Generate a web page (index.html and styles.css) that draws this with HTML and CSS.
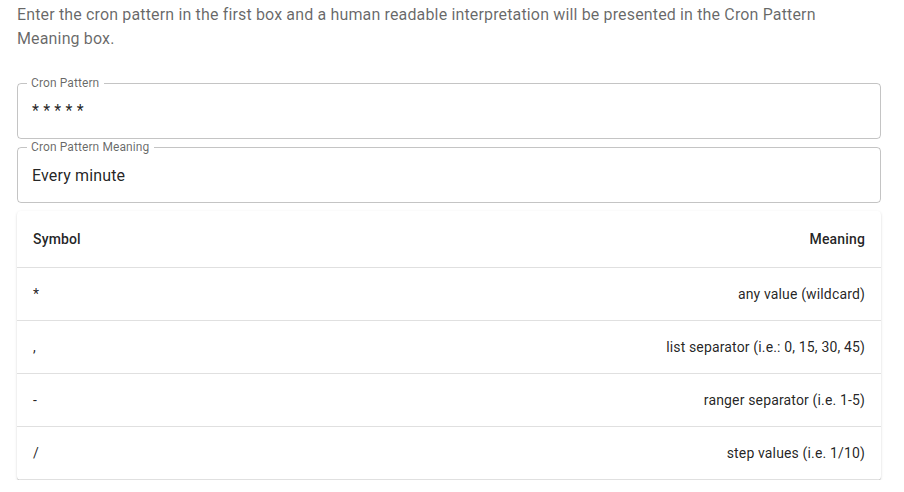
FILE: index.html
```html
<!DOCTYPE html>
<html lang="en">
<head>
<meta charset="utf-8">
<title>Cron Pattern</title>
<link rel="stylesheet" href="styles.css">
</head>
<body>
<main class="page">
  <p class="intro">Enter the cron pattern in the first box and a human readable interpretation will be presented in the Cron Pattern Meaning box.</p>

  <div class="field field-first">
    <span class="field-label">Cron Pattern</span>
    <div class="field-input field-input-pattern">* * * * *</div>
  </div>

  <div class="field">
    <span class="field-label">Cron Pattern Meaning</span>
    <div class="field-input">Every minute</div>
  </div>

  <div class="paper">
    <table class="table">
      <thead>
        <tr><th class="cell">Symbol</th><th class="cell cell-right">Meaning</th></tr>
      </thead>
      <tbody>
        <tr><td class="cell">*</td><td class="cell cell-right">any value (wildcard)</td></tr>
        <tr><td class="cell">,</td><td class="cell cell-right">list separator (i.e.: 0, 15, 30, 45)</td></tr>
        <tr><td class="cell">-</td><td class="cell cell-right">ranger separator (i.e. 1-5)</td></tr>
        <tr><td class="cell">/</td><td class="cell cell-right">step values (i.e. 1/10)</td></tr>
      </tbody>
    </table>
  </div>
</main>
</body>
</html>
```

FILE: styles.css
```css
* { box-sizing: border-box; }

html, body {
  margin: 0;
  padding: 0;
  background: #fff;
  font-family: Roboto, "Liberation Sans", Arial, sans-serif;
}

.page {
  width: 864px;
  margin-left: 17px;
  padding-top: 3px;
  display: flex;
  flex-direction: column;
}

.intro {
  margin: 0;
  font-size: 16px;
  line-height: 24px;
  color: rgba(0, 0, 0, 0.6);
  letter-spacing: 0.15px;
}

.field {
  position: relative;
  height: 56px;
  border: 1px solid rgba(0, 0, 0, 0.23);
  border-radius: 4px;
  margin-top: 8px;
  display: flex;
  align-items: center;
  padding: 0 14px;
}

.field-first {
  margin-top: 32px;
}

.field-label {
  position: absolute;
  top: -8px;
  left: 9px;
  padding: 0 5px 0 4px;
  background: #fff;
  font-size: 12px;
  line-height: 14px;
  color: rgba(0, 0, 0, 0.6);
  letter-spacing: 0.1px;
}

.field-input {
  font-size: 16px;
  line-height: 23px;
  color: rgba(0, 0, 0, 0.87);
  letter-spacing: 0.15px;
}

.field-input-pattern {
  margin-top: -2px;
}

.paper {
  margin-top: 8px;
  background: #fff;
  border-radius: 4px;
  box-shadow: 0px 2px 1px -1px rgba(0,0,0,0.2), 0px 1px 1px 0px rgba(0,0,0,0.14), 0px 1px 3px 0px rgba(0,0,0,0.12);
  overflow: hidden;
}

.table {
  width: 100%;
  border-collapse: collapse;
}

.cell {
  padding: 16px;
  font-size: 14px;
  line-height: 20px;
  font-weight: 400;
  color: rgba(0, 0, 0, 0.87);
  text-align: left;
  border-bottom: 1px solid rgb(224, 224, 224);
  letter-spacing: 0.15px;
}

thead .cell {
  font-weight: 500;
  line-height: 24px;
}

.cell-right {
  text-align: right;
}
```
